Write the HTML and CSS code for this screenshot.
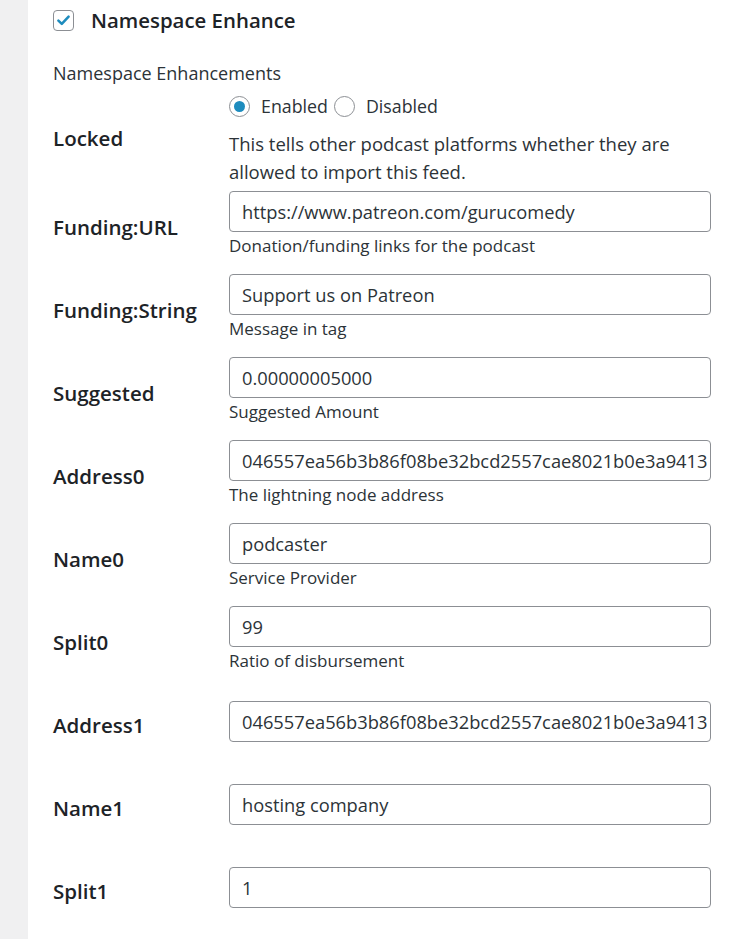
FILE: index.html
```html
<!DOCTYPE html>
<html lang="en">
<head>
<meta charset="utf-8">
<title>Namespace Enhance</title>
<link rel="stylesheet" href="styles.css">
</head>
<body>
<div class="panel">
  <div class="header">
    <span class="checkbox">
      <svg viewBox="0 0 20 20" width="20" height="20"><path d="M4 10.2 L8 14 L16 5.5" fill="none" stroke="#1e8cbe" stroke-width="3" stroke-linecap="round" stroke-linejoin="round"/></svg>
    </span>
    <span class="header-title">Namespace Enhance</span>
  </div>
  <div class="caption">Namespace Enhancements</div>

  <div class="row row-locked">
    <div class="label">Locked</div>
    <div class="field">
      <div class="radios">
        <span class="radio checked"></span><span class="radio-text">Enabled</span><span class="radio"></span><span class="radio-text">Disabled</span>
      </div>
      <p class="long-desc">This tells other podcast platforms whether they are allowed to import this feed.</p>
    </div>
  </div>

  <div class="row">
    <div class="label">Funding:URL</div>
    <div class="field">
      <div class="input">https://www.patreon.com/gurucomedy</div>
      <p class="desc">Donation/funding links for the podcast</p>
    </div>
  </div>

  <div class="row">
    <div class="label">Funding:String</div>
    <div class="field">
      <div class="input">Support us on Patreon</div>
      <p class="desc">Message in tag</p>
    </div>
  </div>

  <div class="row">
    <div class="label">Suggested</div>
    <div class="field">
      <div class="input">0.00000005000</div>
      <p class="desc">Suggested Amount</p>
    </div>
  </div>

  <div class="row">
    <div class="label">Address0</div>
    <div class="field">
      <div class="input">046557ea56b3b86f08be32bcd2557cae8021b0e3a9413</div>
      <p class="desc">The lightning node address</p>
    </div>
  </div>

  <div class="row">
    <div class="label">Name0</div>
    <div class="field">
      <div class="input">podcaster</div>
      <p class="desc">Service Provider</p>
    </div>
  </div>

  <div class="row">
    <div class="label">Split0</div>
    <div class="field">
      <div class="input">99</div>
      <p class="desc">Ratio of disbursement</p>
    </div>
  </div>

  <div class="row row-plain">
    <div class="label">Address1</div>
    <div class="field">
      <div class="input">046557ea56b3b86f08be32bcd2557cae8021b0e3a9413</div>
    </div>
  </div>

  <div class="row row-plain">
    <div class="label">Name1</div>
    <div class="field">
      <div class="input">hosting company</div>
    </div>
  </div>

  <div class="row row-plain">
    <div class="label">Split1</div>
    <div class="field">
      <div class="input">1</div>
    </div>
  </div>
</div>
</body>
</html>
```

FILE: styles.css
```css
html, body {
  margin: 0;
  padding: 0;
  background: #f0f0f1;
}
body {
  font-family: "Open Sans", "Noto Sans", sans-serif;
  color: #1d2327;
}
.panel {
  margin-left: 28px;
  background: #fff;
  min-height: 939px;
  padding: 0 0 0 25px;
  box-sizing: border-box;
}
.header {
  display: flex;
  align-items: center;
  height: 40px;
  gap: 17px;
}
.checkbox {
  width: 21px;
  height: 21px;
  box-sizing: border-box;
  border: 1px solid #8c8f94;
  border-radius: 4px;
  display: flex;
  align-items: center;
  justify-content: center;
}
.checkbox svg {
  width: 17px;
  height: 17px;
}
.header-title {
  font-size: 20.4px;
  font-weight: 600;
  color: #1d2327;
}
.caption {
  font-size: 18px;
  line-height: 24px;
  margin-top: 21px;
  color: #2c3338;
}
.row {
  display: flex;
  align-items: center;
  padding: 8.5px 0;
}
.row-plain {
  padding: 21px 0;
}
.row-locked {
  padding: 0;
  margin-top: 7px;
  margin-bottom: -4px;
}
.label {
  width: 176px;
  flex: none;
  font-size: 20.5px;
  font-weight: 600;
  line-height: 28px;
  padding-top: 7px;
}
.row-locked .label {
  padding: 0 0 3px;
}
.field {
  width: 482px;
}
.radios {
  display: flex;
  align-items: center;
  height: 28px;
  font-size: 17.8px;
  color: #2c3338;
}
.radio {
  width: 21px;
  height: 21px;
  box-sizing: border-box;
  border: 1px solid #8c8f94;
  border-radius: 50%;
  background: #fff;
  display: flex;
  align-items: center;
  justify-content: center;
  flex: none;
}
.radio.checked::after {
  content: "";
  width: 11px;
  height: 11px;
  border-radius: 50%;
  background: #1e8cbe;
}
.radio-text {
  margin-left: 11px;
  margin-right: 6px;
}
.long-desc {
  margin: 10px 0 0;
  font-size: 18.5px;
  line-height: 28px;
  color: #2c3338;
}
.input {
  height: 41px;
  box-sizing: border-box;
  border: 1px solid #8c8f94;
  border-radius: 4px;
  padding: 0 12px;
  font-size: 18.3px;
  line-height: 39px;
  color: #2c3338;
  white-space: nowrap;
  overflow: hidden;
}
.desc {
  margin: 3px 0 0;
  font-size: 17px;
  line-height: 22px;
  color: #2c3338;
}
```
